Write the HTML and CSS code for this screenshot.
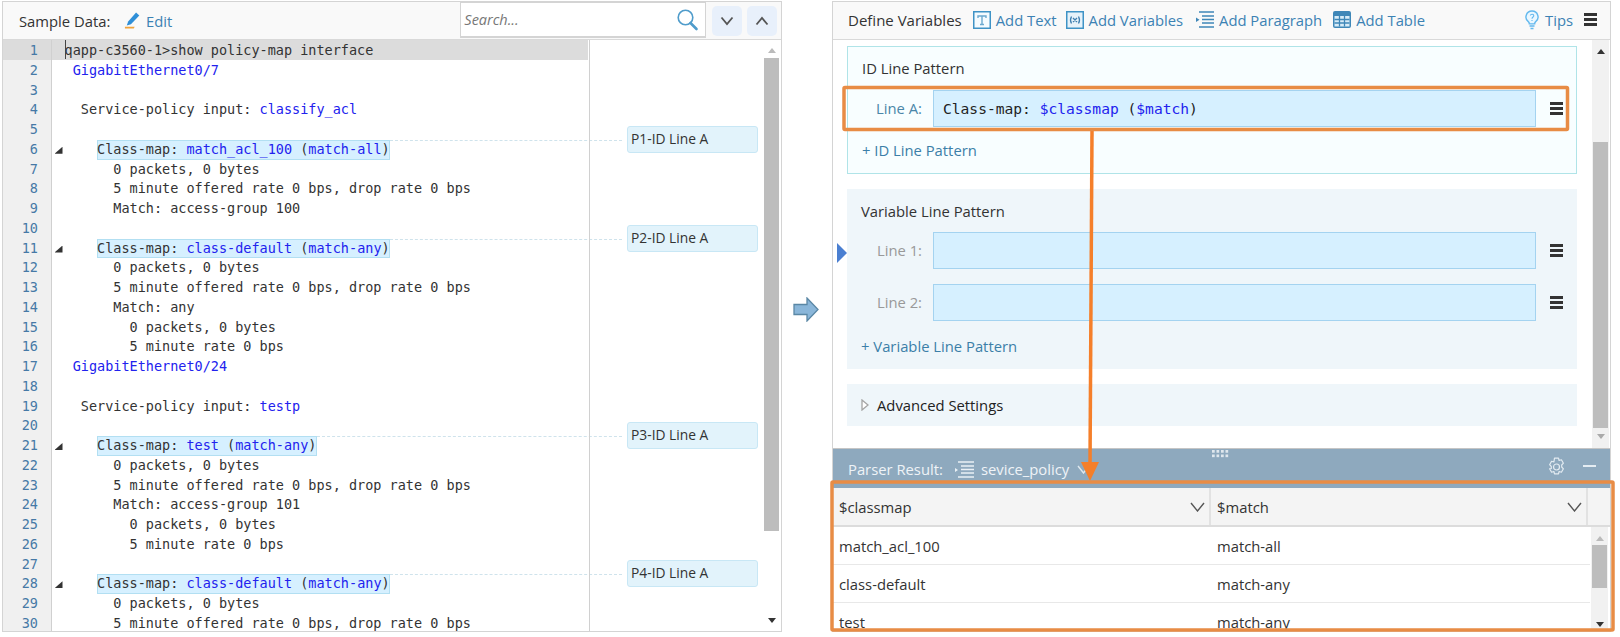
FILE: index.html
```html
<!DOCTYPE html>
<html lang="en">
<head>
<meta charset="utf-8">
<title>Parser</title>
<link rel="stylesheet" href="styles.css">
</head>
<body>
<div class="page">
  <section class="panel left">
    <header class="head left-head">
      <span class="head-title">Sample Data:</span>
      <a class="link edit">
        <svg class="ic" width="17" height="17" viewBox="0 0 18 18"><path d="M13 .5l3.500 3-9 9.500-4.500 1.500 1.500-4.500z" fill="#2f8fd8"/><path d="M1 15.800h10.500l-1 1.700H1z" fill="#f0a33c"/></svg>
        Edit</a>
      <div class="search">
        <span class="search-text">Search...</span>
        <svg width="23" height="23" viewBox="0 0 23 23"><circle cx="9.500" cy="9.500" r="7.300" fill="none" stroke="#4f9ccb" stroke-width="1.600"/><path d="M14.500 15l6 6" stroke="#4f9ccb" stroke-width="2.600" stroke-linecap="round"/></svg>
      </div>
      <button class="nav"><svg width="14" height="10" viewBox="0 0 14 10"><path d="M1.500 1.500L7 8l5.500-6.500" fill="none" stroke="#555" stroke-width="1.800"/></svg></button>
      <button class="nav"><svg width="14" height="10" viewBox="0 0 14 10"><path d="M1.500 8.500L7 2l5.500 6.500" fill="none" stroke="#555" stroke-width="1.800"/></svg></button>
    </header>
    <div class="editor">
      <div class="code">
        <div class="row current"><span class="num">1</span><span class="fold"></span><span class="txt"><i class="caret"></i>qapp-c3560-1&gt;show policy-map interface</span></div>
        <div class="row"><span class="num">2</span><span class="fold"></span><span class="txt"> <b>GigabitEthernet0/7</b></span></div>
        <div class="row"><span class="num">3</span><span class="fold"></span><span class="txt"></span></div>
        <div class="row"><span class="num">4</span><span class="fold"></span><span class="txt">  Service-policy input: <b>classify_acl</b></span></div>
        <div class="row"><span class="num">5</span><span class="fold"></span><span class="txt"></span></div>
        <div class="row"><span class="num">6</span><span class="fold open"></span><span class="txt">    <span class="hit">Class-map: <b>match_acl_100</b> (<b>match-all</b>)</span></span><span class="leader"></span><span class="tag">P1-ID Line A</span></div>
        <div class="row"><span class="num">7</span><span class="fold"></span><span class="txt">      0 packets, 0 bytes</span></div>
        <div class="row"><span class="num">8</span><span class="fold"></span><span class="txt">      5 minute offered rate 0 bps, drop rate 0 bps</span></div>
        <div class="row"><span class="num">9</span><span class="fold"></span><span class="txt">      Match: access-group 100</span></div>
        <div class="row"><span class="num">10</span><span class="fold"></span><span class="txt"></span></div>
        <div class="row"><span class="num">11</span><span class="fold open"></span><span class="txt">    <span class="hit">Class-map: <b>class-default</b> (<b>match-any</b>)</span></span><span class="leader"></span><span class="tag">P2-ID Line A</span></div>
        <div class="row"><span class="num">12</span><span class="fold"></span><span class="txt">      0 packets, 0 bytes</span></div>
        <div class="row"><span class="num">13</span><span class="fold"></span><span class="txt">      5 minute offered rate 0 bps, drop rate 0 bps</span></div>
        <div class="row"><span class="num">14</span><span class="fold"></span><span class="txt">      Match: any</span></div>
        <div class="row"><span class="num">15</span><span class="fold"></span><span class="txt">        0 packets, 0 bytes</span></div>
        <div class="row"><span class="num">16</span><span class="fold"></span><span class="txt">        5 minute rate 0 bps</span></div>
        <div class="row"><span class="num">17</span><span class="fold"></span><span class="txt"> <b>GigabitEthernet0/24</b></span></div>
        <div class="row"><span class="num">18</span><span class="fold"></span><span class="txt"></span></div>
        <div class="row"><span class="num">19</span><span class="fold"></span><span class="txt">  Service-policy input: <b>testp</b></span></div>
        <div class="row"><span class="num">20</span><span class="fold"></span><span class="txt"></span></div>
        <div class="row"><span class="num">21</span><span class="fold open"></span><span class="txt">    <span class="hit">Class-map: <b>test</b> (<b>match-any</b>)</span></span><span class="leader"></span><span class="tag">P3-ID Line A</span></div>
        <div class="row"><span class="num">22</span><span class="fold"></span><span class="txt">      0 packets, 0 bytes</span></div>
        <div class="row"><span class="num">23</span><span class="fold"></span><span class="txt">      5 minute offered rate 0 bps, drop rate 0 bps</span></div>
        <div class="row"><span class="num">24</span><span class="fold"></span><span class="txt">      Match: access-group 101</span></div>
        <div class="row"><span class="num">25</span><span class="fold"></span><span class="txt">        0 packets, 0 bytes</span></div>
        <div class="row"><span class="num">26</span><span class="fold"></span><span class="txt">        5 minute rate 0 bps</span></div>
        <div class="row"><span class="num">27</span><span class="fold"></span><span class="txt"></span></div>
        <div class="row"><span class="num">28</span><span class="fold open"></span><span class="txt">    <span class="hit">Class-map: <b>class-default</b> (<b>match-any</b>)</span></span><span class="leader"></span><span class="tag">P4-ID Line A</span></div>
        <div class="row"><span class="num">29</span><span class="fold"></span><span class="txt">      0 packets, 0 bytes</span></div>
        <div class="row"><span class="num">30</span><span class="fold"></span><span class="txt">      5 minute offered rate 0 bps, drop rate 0 bps</span></div>
      </div>
      <div class="vbar vbar-left">
        <span class="arr up pale"></span>
        <div class="track"><div class="thumb thumb-code"></div></div>
        <span class="arr down"></span>
      </div>
    </div>
  </section>

  <div class="gutter-arrow">
    <svg width="26" height="25" viewBox="0 0 26 25"><path d="M1 7.500h13V1l11 11.500L14 24v-6.500H1z" fill="#8ab6d9" stroke="#5a87a5" stroke-width="1.300"/></svg>
  </div>

  <section class="panel right">
    <header class="head right-head">
      <span class="head-title">Define Variables</span>
      <a class="link tool">
        <svg width="18" height="18" viewBox="0 0 18 18"><rect x=".75" y=".75" width="16.500" height="16.500" fill="#f4fbff" stroke="#3f93c6" stroke-width="1.500"/><path d="M5 7V5h8v2M9 5v8.500M7 13.500h4" fill="none" stroke="#6ba9cf" stroke-width="1.400"/></svg>
        Add Text</a>
      <a class="link tool">
        <svg width="18" height="18" viewBox="0 0 18 18"><rect x=".75" y=".75" width="16.500" height="16.500" fill="#e6f2fa" stroke="#3f93c6" stroke-width="1.500"/><path d="M5.500 5.500q-2 3.500 0 7M12.500 5.500q2 3.500 0 7M7 7l4 4M11 7l-4 4" fill="none" stroke="#3f7fb0" stroke-width="1.300"/></svg>
        Add Variables</a>
      <a class="link tool">
        <svg width="20" height="18" viewBox="0 0 20 18"><path d="M4 1h15M7 5h12M7 8.500h12M7 12h12M4 16h15" stroke="#3f87b8" stroke-width="1.500"/><path d="M1 6.500l3.500 2.200L1 11z" fill="#3f87b8"/></svg>
        Add Paragraph</a>
      <a class="link tool">
        <svg width="18" height="17" viewBox="0 0 18 17"><rect x="0" y="0" width="18" height="17" rx="2" fill="#3f87b8"/><path d="M1.500 5h15v10.500h-15z" fill="#d8ecf8"/><path d="M1.500 8.500h15M1.500 12h15M6.500 5v10.500M11.500 5v10.500" stroke="#3f87b8" stroke-width="1.300"/></svg>
        Add Table</a>
      <span class="spring"></span>
      <a class="link tips">
        <svg width="14" height="20" viewBox="0 0 14 20"><path d="M7 1a6 6 0 0 0-3.500 10.900c.6.500.8 1.100.8 2h5.400c0-.9.200-1.500.8-2A6 6 0 0 0 7 1z" fill="#eaf7ff" stroke="#62b8ee" stroke-width="1.400"/><path d="M4.500 16h5M5.500 18.500h3" stroke="#62b8ee" stroke-width="1.500"/><path d="M5.300 5.500c.3-1.700 3.500-1.700 3.500.2 0 1.300-1.800 1.300-1.800 3M7 10v1" fill="none" stroke="#62b8ee" stroke-width="1.100"/></svg>
        Tips</a>
      <span class="burger head-burger"></span>
    </header>
    <div class="form-wrap">
      <div class="form">
        <div class="box id-box">
          <h3 class="box-title">ID Line Pattern</h3>
          <div class="line">
            <span class="line-label id-label">Line A:</span>
            <div class="pattern">Class-map: <b>$classmap</b> (<b>$match</b>)</div>
            <span class="burger"></span>
          </div>
          <a class="add">+ ID Line Pattern</a>
        </div>
        <div class="box var-box">
          <span class="marker"></span>
          <h3 class="box-title">Variable Line Pattern</h3>
          <div class="line">
            <span class="line-label">Line 1:</span>
            <div class="pattern"></div>
            <span class="burger"></span>
          </div>
          <div class="line second">
            <span class="line-label">Line 2:</span>
            <div class="pattern"></div>
            <span class="burger"></span>
          </div>
          <a class="add">+ Variable Line Pattern</a>
        </div>
        <div class="box adv-box">
          <svg width="8" height="12" viewBox="0 0 8 12"><path d="M1 1l6 5-6 5z" fill="#fff" stroke="#a5a5a5" stroke-width="1.300"/></svg>
          <span>Advanced Settings</span>
        </div>
      </div>
      <div class="vbar vbar-form">
        <span class="arr up"></span>
        <div class="track"><div class="thumb thumb-form"></div></div>
        <span class="arr down pale"></span>
      </div>
    </div>
    <div class="result-bar">
      <span class="grip"></span>
      <span class="result-title">Parser Result:</span>
      <svg width="19" height="17" viewBox="0 0 19 17"><path d="M3 1h16M6 5h13M6 8.500h13M6 12h13M3 16h16" stroke="#e9f0f5" stroke-width="1.400"/><path d="M0 7l3 2-3 2z" fill="#e9f0f5"/></svg>
      <span class="result-name">sevice_policy</span>
      <svg class="result-chev" width="13" height="9" viewBox="0 0 13 9"><path d="M1 1l5.500 7L12 1" fill="none" stroke="#dfe8ee" stroke-width="1.400"/></svg>
      <span class="spring"></span>
      <svg class="gear" width="19" height="19" viewBox="0 0 19 19"><path d="M7.500 1.200h4l.6 2.300 2.300-.7 2 3.400-1.700 1.800v2l1.700 1.800-2 3.400-2.300-.7-.6 2.300h-4l-.6-2.300-2.300.7-2-3.400L4.300 11.500v-2L2.600 7.700l2-3.400 2.300.7z" fill="none" stroke="#e4ecf2" stroke-width="1.200" stroke-linejoin="round"/><circle cx="9.500" cy="10" r="3" fill="none" stroke="#e4ecf2" stroke-width="1.200"/></svg>
      <span class="minus"></span>
    </div>
    <div class="table">
      <div class="thead">
        <div class="th">$classmap<svg width="15" height="10" viewBox="0 0 15 10"><path d="M1 1l6.500 8L14 1" fill="none" stroke="#555" stroke-width="1.400"/></svg></div>
        <div class="th">$match<svg width="15" height="10" viewBox="0 0 15 10"><path d="M1 1l6.500 8L14 1" fill="none" stroke="#555" stroke-width="1.400"/></svg></div>
        <div class="th th-end"></div>
      </div>
      <div class="tbody">
        <div class="trows">
          <div class="tr"><div class="td">match_acl_100</div><div class="td">match-all</div></div>
          <div class="tr"><div class="td">class-default</div><div class="td">match-any</div></div>
          <div class="tr"><div class="td">test</div><div class="td">match-any</div></div>
        </div>
        <div class="vbar vbar-table">
          <span class="arr up pale"></span>
          <div class="track"><div class="thumb thumb-table"></div></div>
          <span class="arr down"></span>
        </div>
      </div>
    </div>
  </section>

  <svg class="overlay" width="1620" height="637" viewBox="0 0 1620 637">
    <path d="M1092 131L1090 466" stroke="#f57f2a" stroke-width="3.500" fill="none"/>
    <path d="M1081 462h18l-9 19z" fill="#f57f2a"/>
    <rect x="844" y="87.500" width="723.500" height="42" rx="1" fill="none" stroke="#e88c45" stroke-width="3.500"/>
    <rect x="832" y="482" width="781" height="148" rx="1" fill="none" stroke="#e88c45" stroke-width="3.500"/>
  </svg>
</div>
</body>
</html>
```

FILE: styles.css
```css
* { box-sizing: border-box; }
html, body { margin: 0; background: #fff; }
body { font-family: "Open Sans", sans-serif; font-size: 14.8px; color: #333; }
a { text-decoration: none; }
h3 { margin: 0; font: inherit; }

.page { position: relative; width: 1620px; height: 637px; padding: 1px 0 0 2px; display: flex; align-items: flex-start; overflow: hidden; }
.panel { border: 1px solid #d4d4d4; height: 631px; display: flex; flex-direction: column; flex: none; background: #fff; }
.left { width: 780px; }
.right { width: 779px; }
.gutter-arrow { width: 50px; flex: none; display: flex; justify-content: center; padding: 296px 2px 0 0; }

.head { height: 38px; flex: none; background: #f9f9f9; border-bottom: 1px solid #d9d9d9; display: flex; align-items: center; }
.head-title { color: #333; flex: none; }
.link { color: #3c82b4; display: inline-flex; align-items: center; gap: 5px; }
.left-head { padding-left: 16px; }
.edit { margin-left: 14px; margin-right: 288px; width: 48px; flex: none; white-space: nowrap; }
.search { width: 246px; height: 37px; margin-top: -1px; align-self: flex-start; background: #fff; border: 1px solid #d4d4d4; border-top-width: 2px; border-bottom-width: 2px; display: flex; align-items: center; justify-content: space-between; padding: 0 6px 0 3px; flex: none; }
.search-text { font-style: italic; color: #777; font-size: 14.5px; }
.nav { width: 30px; height: 30px; border: 0; border-radius: 5px; background: #e8f0fb; margin-left: 5px; padding: 0; display: flex; align-items: center; justify-content: center; }
.search + .nav { margin-left: 6px; }

.editor { flex: 1; min-height: 0; display: flex; position: relative; }
.code { width: 761px; flex: none; position: relative; overflow: hidden; font-family: "DejaVu Sans Mono", monospace; font-size: 13.5px; color: #333; }
.code::after { content: ""; position: absolute; top: 0; bottom: 0; left: 586px; width: 1px; background: #d0d0d0; }
.row { height: 19.75px; line-height: 19.75px; display: flex; white-space: pre; align-items: flex-start; }
.current .num, .current .fold, .current .txt { background: #dcdcdc; }
.current .txt { width: 523px; flex: none; position: relative; }
.caret { position: absolute; left: 0; top: 0; width: 1px; height: 19px; background: #444; }
.num { width: 49px; flex: none; height: 100%; background: #f0f0f0; border-right: 1px solid #d0d0d0; text-align: right; padding: 1px 13px 0 0; color: #4679a6; }
.fold { width: 12.5px; flex: none; height: 100%; position: relative; }
.fold.open::after { content: ""; position: absolute; left: 2.5px; top: 8px; width: 8px; height: 7px; background: #333; clip-path: polygon(100% 0, 100% 100%, 0 100%); }
.txt { flex: none; height: 100%; padding-top: 1px; }
.txt b { font-weight: 400; color: #2222ee; }
.hit { display: inline-block; height: 19.75px; line-height: 19px; background: #d6f0ff; box-shadow: inset 0 0 0 1px #b2dff2; }
.leader { flex: 1; min-width: 0; height: 1px; margin-top: 1px; border-top: 1px dashed #cfe3ec; }
.tag { width: 131px; height: 27px; margin: -13px 6px 0 5px; flex: none; position: relative; z-index: 1; background: #e2f3fb; border: 1px solid #c8e7f5; border-radius: 3px; padding-left: 3px; line-height: 24px; font-family: "Open Sans", sans-serif; font-size: 13.8px; color: #333; }

.vbar { display: flex; flex-direction: column; align-items: center; flex: none; }
.track { flex: 1; width: 100%; min-height: 0; }
.arr { width: 0; height: 0; border-left: 4px solid transparent; border-right: 4px solid transparent; flex: none; }
.arr.up { border-bottom: 5px solid #333; }
.arr.down { border-top: 5px solid #333; }
.arr.up.pale { border-bottom-color: #bbb; }
.arr.down.pale { border-top-color: #aaa; }
.thumb { background: #bdbdbd; width: 100%; }
.vbar-left { width: 15px; padding: 8px 0; }
.vbar-left .track { margin: 5px 0 6px; }
.thumb-code { height: 473px; }

.right-head { padding: 0 0 2px 15px; }
.right-head .head-title { font-size: 15px; }
.tool { margin-left: 11px; }
.tool:nth-of-type(2) { margin-left: 9px; }
.tool:nth-of-type(3) { gap: 4px; margin-left: 12px; }
.spring { flex: 1; }
.tips { gap: 6px; margin-right: 11px; }
.burger { width: 13px; height: 13px; flex: none; border-top: 3px solid #333; border-bottom: 3px solid #333; position: relative; display: block; }
.burger::after { content: ""; position: absolute; left: 0; right: 0; top: 2px; height: 3px; background: #333; }
.head-burger { margin-right: 13px; }

.form-wrap { height: 408px; flex: none; display: flex; }
.form { width: 759px; flex: none; padding: 6px 15px 0 14px; display: flex; flex-direction: column; gap: 15px; }
.box { width: 730px; position: relative; }
.box-title { height: 20px; line-height: 20px; padding-left: 14px; margin-bottom: 11px; color: #333; }
.id-box { height: 128px; background: #f8feff; border: 1px solid #b0e4e8; padding-top: 11px; }
.id-box .box-title { margin-bottom: 12px; }
.var-box { height: 180px; background: #eff6fa; padding-top: 12px; }
.adv-box { height: 42px; background: #eff6fa; display: flex; align-items: center; color: #222; padding-left: 14px; gap: 8px; }
.line { display: flex; align-items: center; height: 37px; }
.second { margin-top: 15px; }
.line-label { width: 86px; flex: none; text-align: right; color: #999; padding: 0 11px 2px 0; }
.id-label { color: #4a86a8; width: 85px; }
.pattern { width: 603px; height: 37px; flex: none; margin-right: 14px; background: #d6f0ff; border: 1px solid #a4d3f0; padding-left: 9px; line-height: 35px; font-family: "DejaVu Sans Mono", monospace; font-size: 14.6px; color: #222; }
.pattern b { font-weight: 400; color: #2222ee; }
.add { display: block; height: 20px; line-height: 20px; margin: 13px 0 0 14px; color: #3c7fa8; }
.var-box .add { margin-top: 15px; }
.marker { position: absolute; left: -10px; top: 54px; width: 0; height: 0; border-left: 10px solid #4a7fd1; border-top: 10px solid transparent; border-bottom: 10px solid transparent; }
.vbar-form { width: 17px; background: #f1f1f1; padding: 9px 1px; }
.vbar-form .track { margin: 6px 0; padding-top: 82px; }
.thumb-form { height: 286px; }

.result-bar { height: 40px; flex: none; background: #8ea9be; border-top: 1px solid #c5c5c5; display: flex; align-items: center; position: relative; padding: 1px 0 0 15px; color: #eef3f7; }
.grip { position: absolute; left: 379px; top: 1px; width: 18px; height: 9px; background-image: radial-gradient(circle at 1.500px 1.500px, #dfe7ed 1.500px, transparent 1.600px); background-size: 4.500px 4.500px; }
.result-title { margin-right: 12px; }
.result-name { margin-left: 7px; }
.result-chev { margin-left: 8px; }
.gear { margin-bottom: 6px; }
.minus { width: 13px; height: 2px; background: #e4ecf2; margin: 0 14px 6px 17px; }

.table { flex: 1; min-height: 0; overflow: hidden; }
.thead { height: 39px; display: grid; grid-template-columns: 378px 377px 1fr; background: #f4f4f4; border-bottom: 2px solid #dcdcdc; }
.th { display: flex; align-items: center; justify-content: space-between; padding: 0 4px 0 6px; border-right: 2px solid #e2e2e2; }
.th-end { border-right: 0; }
.tbody { display: flex; height: 106px; overflow: hidden; }
.trows { width: 757px; flex: none; }
.tr { height: 38px; display: grid; grid-template-columns: 378px 1fr; border-bottom: 1px solid #e8e8e8; align-items: center; }
.td { padding-left: 6px; }
.vbar-table { width: 17px; margin-left: 1px; background: #f1f1f1; padding: 9px 1px 6px; }
.vbar-table .track { margin-top: 4px; }
.thumb-table { height: 43px; }

.overlay { position: absolute; left: 0; top: 0; pointer-events: none; }
```
